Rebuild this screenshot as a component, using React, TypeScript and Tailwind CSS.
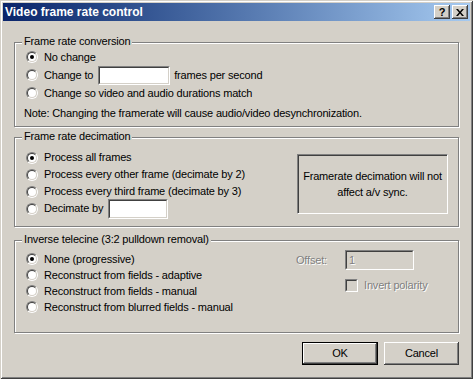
import type { ReactNode } from "react";

const raised =
  "shadow-[inset_-1px_-1px_0_#404040,inset_1px_1px_0_#fff,inset_-2px_-2px_0_#808080]";
const sunken =
  "border border-t-[#808080] border-l-[#808080] border-b-white border-r-white";

const Radio = ({ checked = false }: { checked?: boolean }) => (
  <span className="w-[12px] h-[12px] shrink-0 rounded-full border border-t-[#808080] border-l-[#808080] border-b-white border-r-white flex">
    <span className="flex-1 rounded-full border border-t-[#404040] border-l-[#404040] border-b-[#d4d0c8] border-r-[#d4d0c8] bg-white flex items-center justify-center">
      {checked && <span className="w-[4px] h-[4px] rounded-full bg-black" />}
    </span>
  </span>
);

const Field = ({ className, children }: { className: string; children?: ReactNode }) => (
  <div className={`${sunken} shrink-0 ${className}`}>
    <div className="h-full border border-t-[#404040] border-l-[#404040] border-b-[#d4d0c8] border-r-[#d4d0c8] flex items-center px-[1px]">
      {children}
    </div>
  </div>
);

const Group = ({ title, className, children }: { title: string; className: string; children: ReactNode }) => (
  <div className={`relative border border-[#808080] shadow-[inset_1px_1px_0_#fff,1px_1px_0_#fff] ${className}`}>
    <span className="absolute left-[7px] -top-[9px] px-[2px] bg-[#d4d0c8] leading-[14px] whitespace-nowrap">
      {title}
    </span>
    {children}
  </div>
);

const Option = ({ label, checked, h, children }: { label: string; checked?: boolean; h: string; children?: ReactNode }) => (
  <div className={`flex items-center whitespace-nowrap ${h}`}>
    <Radio checked={checked} />
    <span className="ml-[6px]">{label}</span>
    {children}
  </div>
);

const TitleButton = ({ children }: { children: ReactNode }) => (
  <div className={`w-[16px] h-[14px] bg-[#d4d0c8] ${raised} flex items-center justify-center text-[11px] font-bold leading-none text-black tracking-normal`}>
    {children}
  </div>
);

export default function App() {
  return (
    <div className="w-[473px] h-[379px] bg-[#d4d0c8] p-[3px] shadow-[inset_1px_1px_0_#d4d0c8,inset_-1px_-1px_0_#404040,inset_2px_2px_0_#fff,inset_-2px_-2px_0_#808080] font-['Liberation_Sans',Arial,sans-serif] text-[11px] tracking-[-0.17px] text-black flex flex-col overflow-hidden">
      {/* title bar */}
      <div className="h-[18px] shrink-0 bg-linear-to-r from-[#0a246a] to-[#a6caf0] flex items-center pl-[2px] pr-[2px]">
        <span className="text-white font-bold text-[12px] tracking-normal leading-none">Video frame rate control</span>
        <div className="ml-auto flex gap-[2px]">
          <TitleButton>?</TitleButton>
          <TitleButton>
            <svg width="8" height="7" viewBox="0 0 8 7">
              <path d="M0 0h2l2 2.5L6 0h2L5 3.5 8 7H6L4 4.5 2 7H0l3-3.5z" fill="#000" />
            </svg>
          </TitleButton>
        </div>
      </div>

      <div className="px-[11px] flex flex-col">
        <Group title="Frame rate conversion" className="mt-[21px] h-[85px] pt-[5px] pl-[11px]">
          <Option label="No change" checked h="h-[18px]" />
          <Option label="Change to" h="h-[18px]">
            <Field className="ml-[5px] w-[72px] h-[19px] bg-white" />
            <span className="ml-[4px]">frames per second</span>
          </Option>
          <Option label="Change so video and audio durations match" h="h-[18px]" />
          <div className="mt-[2px] h-[18px] -ml-[2px] flex items-center whitespace-nowrap">
            Note: Changing the framerate will cause audio/video desynchronization.
          </div>
        </Group>

        <Group title="Frame rate decimation" className="mt-[10px] h-[90px] flex items-start">
          <div className="pt-[11px] pl-[11px]">
            <Option label="Process all frames" checked h="h-[17px]" />
            <Option label="Process every other frame (decimate by 2)" h="h-[17px]" />
            <Option label="Process every third frame (decimate by 3)" h="h-[17px]" />
            <Option label="Decimate by" h="h-[17px]">
              <Field className="ml-[5px] w-[60px] h-[20px] bg-white" />
            </Option>
          </div>
          <div className="ml-auto mr-[10px] mt-[16px] w-[151px] h-[60px] border border-t-[#808080] border-l-[#808080] border-b-white border-r-white shadow-[inset_1px_1px_0_#404040] flex items-center justify-center text-center leading-[16px]">
            Framerate decimation will not
            <br />
            affect a/v sync.
          </div>
        </Group>

        <Group title="Inverse telecine (3:2 pulldown removal)" className="mt-[13px] h-[93px] flex items-start">
          <div className="pt-[10px] pl-[11px]">
            <Option label="None (progressive)" checked h="h-[16px]" />
            <Option label="Reconstruct from fields - adaptive" h="h-[16px]" />
            <Option label="Reconstruct from fields - manual" h="h-[16px]" />
            <Option label="Reconstruct from blurred fields - manual" h="h-[16px]" />
          </div>
          <div className="ml-auto mr-[44px] mt-[9px] grid grid-cols-[auto_69px] gap-x-[18px] text-[#808080] [text-shadow:1px_1px_0_#fff]">
            <span className="self-center">Offset:</span>
            <Field className="w-[69px] h-[20px] bg-[#d4d0c8]">
              <span className="pl-[1px]">1</span>
            </Field>
            <span />
            <div className="mt-[7px] flex items-center whitespace-nowrap">
              <div className={`w-[13px] h-[13px] shrink-0 ${sunken}`}>
                <div className="h-full border border-t-[#404040] border-l-[#404040] border-b-[#d4d0c8] border-r-[#d4d0c8] bg-[#d4d0c8]" />
              </div>
              <span className="ml-[6px]">Invert polarity</span>
            </div>
          </div>
        </Group>

        <div className="mt-[9px] flex justify-end gap-[6px]">
          <button className="w-[76px] h-[23px] border border-black bg-[#d4d0c8] p-0">
            <div className={`h-full ${raised} flex items-center justify-center`}>OK</div>
          </button>
          <button className={`w-[75px] h-[23px] bg-[#d4d0c8] ${raised} flex items-center justify-center`}>
            Cancel
          </button>
        </div>
      </div>
    </div>
  );
}
